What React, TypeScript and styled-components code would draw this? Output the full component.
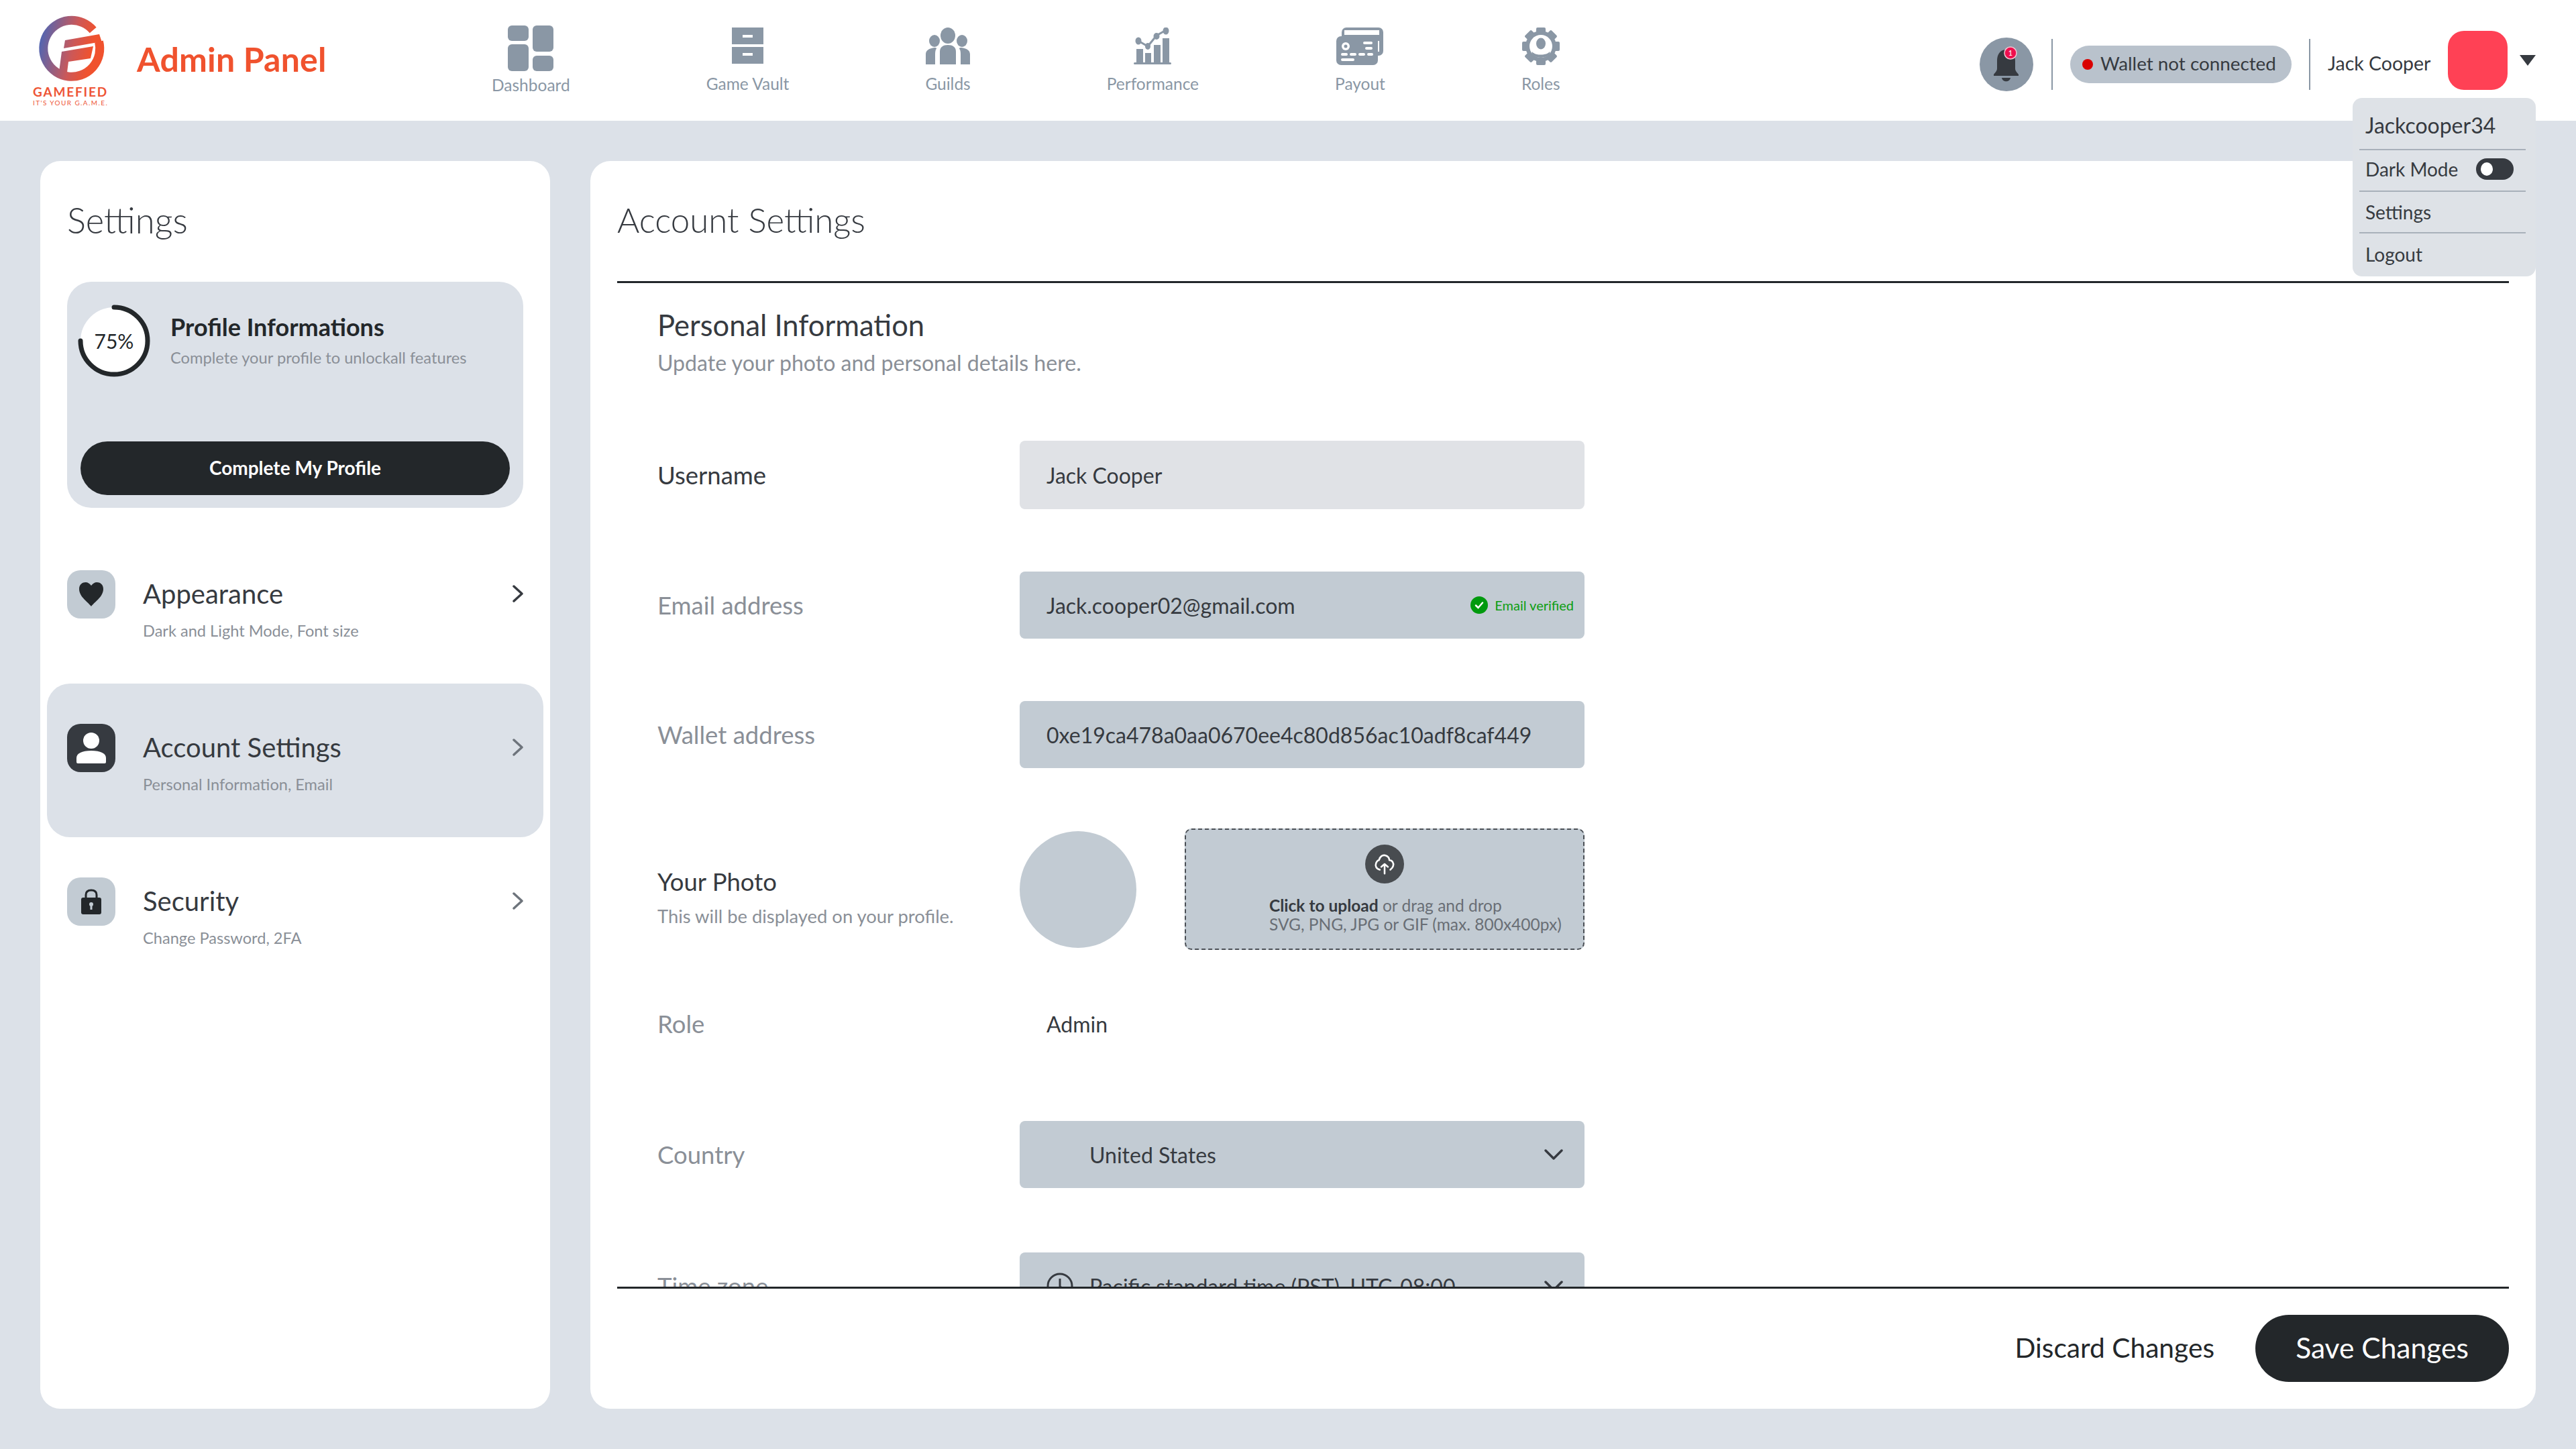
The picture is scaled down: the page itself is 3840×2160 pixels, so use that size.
import React from "react";
import styled, { createGlobalStyle } from "styled-components";

const Global = createGlobalStyle`
  html, body { margin: 0; padding: 0; background: #dce1e8; }
  * { box-sizing: border-box; }
  body { font-family: "Lato", "Noto Sans", sans-serif; color: #363a40; }
`;

const Page = styled.div`width: 3840px; height: 2160px; display: flex; flex-direction: column; background: #dce1e8; position: relative; overflow: hidden;`;
const Header = styled.header`height: 180px; background: #fff; display: flex; flex: none;`;
const LogoBox = styled.div`width: 204px; flex: none; position: relative;`;
const LogoWord = styled.span`position: absolute; left: 49px; top: 127px; width: 112px; text-align: center; font-size: 19px; line-height: 20px; font-weight: 700; letter-spacing: 1.8px; color: #ee5536; white-space: nowrap;`;
const LogoTag = styled.span`position: absolute; left: 49px; top: 146px; width: 112px; text-align: center; font-size: 10px; line-height: 14px; letter-spacing: 1.4px; color: #ee5536; white-space: nowrap;`;
const Brand = styled.div`width: 529px; flex: none; padding-top: 58px; font-size: 50px; line-height: 60px; font-weight: 700; color: #f0522e; letter-spacing: 0.2px;`;
const Nav = styled.nav`display: flex; gap: 203px; align-items: flex-start;`;
const NavItem = styled.div<{ $main?: boolean }>`display: flex; flex-direction: column; align-items: center; padding-top: ${p => p.$main ? 38 : 41}px;`;
const NavIcon = styled.div<{ $main?: boolean }>`height: ${p => p.$main ? 68 : 56}px; margin-bottom: ${p => p.$main ? 6 : 13}px; display: flex;`;
const NavLabel = styled.span`font-size: 24.5px; line-height: 30px; color: #8a97a5; white-space: nowrap; font-weight: 400;`;
const HeaderRight = styled.div`margin-left: auto; padding: 46px 60px 0 0; display: flex; align-items: flex-start;`;
const BellCircle = styled.div`width: 80px; height: 80px; margin-top: 10px; border-radius: 50%; background: #8a97a5; display: flex; align-items: center; justify-content: center;`;
const VRule = styled.div<{ $l: number; $r: number }>`width: 2px; height: 76px; margin: 12px ${p => p.$r}px 0 ${p => p.$l}px; background: #8a97a5;`;
const WalletPill = styled.div`width: 330px; height: 56px; margin-top: 22px; border-radius: 28px; background: #b9c2cc; display: flex; align-items: center; padding: 0 0 3px 18px; gap: 11px; font-size: 27.8px; color: #363a40; white-space: nowrap;`;
const RedDot = styled.span`width: 16px; height: 16px; border-radius: 50%; background: #d90000; flex: none; margin-top: 3px;`;
const UserName = styled.span`width: 179px; margin-top: 30px; font-size: 28.5px; line-height: 36px; white-space: nowrap; color: #363a40;`;
const Avatar = styled.div`width: 89px; height: 88px; border-radius: 24px; background: #ff4155;`;
const Caret = styled.div`width: 0; height: 0; margin: 36px 0 0 18px; border-left: 12px solid transparent; border-right: 12px solid transparent; border-top: 16px solid #363a40;`;

const Menu = styled.div`position: absolute; left: 3507px; top: 146px; width: 273px; height: 266px; background: #dee2e7; border-radius: 14px; padding: 0 15px 0 10px; z-index: 5;`;
const MenuRow = styled.div<{ $h: number; $line?: boolean; $size?: number; $pt?: number; $pb?: number }>`height: ${p => p.$h}px; display: flex; align-items: center; padding: ${p => p.$pt ?? 0}px 18px ${p => p.$pb ?? 0}px 9px; justify-content: space-between; font-size: ${p => p.$size ?? 28}px; color: #363a40; border-bottom: ${p => p.$line ? "2px solid #a8b0ba" : "none"};`;
const Toggle = styled.span`width: 56px; height: 32px; border-radius: 16px; background: #363a40; display: flex; align-items: center; padding-left: 7px;`;
const Knob = styled.span`width: 18px; height: 20px; border-radius: 50%; background: #fff;`;

const Body = styled.main`flex: 1; display: grid; grid-template-columns: 760px 2900px; gap: 60px; padding: 60px;`;
const Panel = styled.section`background: #fff; border-radius: 30px; display: flex; flex-direction: column; overflow: hidden; min-height: 0;`;
const SideTitle = styled.h1`margin: 0; height: 180px; padding: 53px 0 0 40px; font-size: 52.5px; line-height: 70px; font-weight: 300; color: #363a40;`;
const ProfileCard = styled.div`margin: 0 40px; height: 337px; background: #dce1e8; border-radius: 36px; padding: 34px 20px 0 16px; display: flex; flex-direction: column;`;
const ProfileTop = styled.div`display: flex; gap: 30px; height: 204px;`;
const Ring = styled.div`width: 108px; height: 108px; position: relative; flex: none; display: flex; align-items: center; justify-content: center; font-size: 30px; color: #23272a;`;
const RingSvg = styled.svg`position: absolute; inset: 0;`;
const RingValue = styled.span`position: relative;`;
const ProfileTitle = styled.div`font-size: 36px; line-height: 44px; font-weight: 700; color: #23272a; margin-top: 11px; white-space: nowrap;`;
const ProfileSub = styled.div`font-size: 23.7px; line-height: 34px; color: #8a8f97; margin-top: 7px; white-space: nowrap;`;
const CompleteBtn = styled.div`margin-left: 4px; height: 80px; width: 640px; border-radius: 40px; background: #23272a; color: #fff; display: flex; align-items: center; justify-content: center; padding-bottom: 3px; font-size: 28px; font-weight: 700;`;
const SideList = styled.div`display: flex; flex-direction: column; padding: 33px 10px 0;`;
const SideRow = styled.div<{ $active?: boolean }>`height: 229px; border-radius: 34px; padding: 60px 30px 0; display: flex; background: ${p => p.$active ? "#dce1e8" : "transparent"};`;
const SideIcon = styled.div<{ $dark?: boolean }>`width: 72px; height: 72px; border-radius: 20px; flex: none; display: flex; align-items: center; justify-content: center; background: ${p => p.$dark ? "#363a40" : "#c2cbd3"};`;
const SideText = styled.div`margin-left: 41px; flex: 1;`;
const SideRowTitle = styled.div`font-size: 40px; line-height: 50px; margin-top: 10px; color: #363a40; font-weight: 400; white-space: nowrap;`;
const SideRowSub = styled.div`font-size: 23.6px; line-height: 32px; margin-top: 14px; color: #8a8f97; white-space: nowrap;`;
const Chevron = styled.svg`flex: none; margin-top: 22px;`;

const MainHead = styled.h1`margin: 0; height: 179px; padding: 53px 0 0 40px; font-size: 51px; line-height: 70px; font-weight: 300; color: #363a40;`;
const Rule = styled.div`height: 3px; margin: 0 40px; background: #23272a; flex: none;`;
const Scroll = styled.div`height: 1496px; padding: 36px 0 0 100px; overflow: hidden; flex: none;`;
const SectionTitle = styled.h2`margin: 0; font-size: 43.5px; line-height: 52px; font-weight: 400; color: #363a40;`;
const SectionSub = styled.p`margin: 11px 0 0; font-size: 32.1px; line-height: 40px; color: #8a8f97;`;
const Form = styled.div`display: flex; flex-direction: column; margin-top: 96px;`;
const Row = styled.div<{ $mt?: number }>`display: flex; align-items: center; margin-top: ${p => p.$mt ?? 0}px;`;
const LabelCol = styled.div<{ $pt?: number }>`width: 540px; flex: none; padding-top: ${p => p.$pt ?? 0}px;`;
const Label = styled.div<{ $strong?: boolean }>`font-size: 36.5px; line-height: 44px; color: ${p => p.$strong ? "#363a40" : "#8a8f97"};`;
const LabelSub = styled.div`font-size: 27.4px; line-height: 36px; color: #8a8f97; margin-top: 12px; white-space: nowrap;`;
const Field = styled.div<{ $tone?: "soft" | "mid"; $h?: number }>`width: 842px; height: ${p => p.$h ?? 100}px; flex: none; border-radius: 8px; background: ${p => p.$tone === "soft" ? "#e0e2e6" : "#c2cbd3"}; display: flex; align-items: center; padding: 0 16px 0 40px; font-size: 32px; color: #363a40; white-space: nowrap;`;
const FieldGrow = styled.span`flex: 1;`;
const Verified = styled.span`display: flex; align-items: center; gap: 10px; font-size: 20px; color: #0c9e12;`;
const PlainValue = styled.div`padding-left: 40px; height: 100px; display: flex; align-items: center; font-size: 32px; color: #363a40;`;
const Photo = styled.div`width: 174px; height: 174px; border-radius: 50%; background: #c2cbd3; flex: none;`;
const Upload = styled.div`width: 596px; height: 181px; margin-left: 72px; flex: none; border: 2px dashed #4a4f55; border-radius: 10px; background: #c2cbd3; display: flex; flex-direction: column; align-items: center; padding-top: 22px;`;
const UploadIcon = styled.div`width: 58px; height: 58px; border-radius: 50%; background: #484c50; display: flex; align-items: center; justify-content: center;`;
const UploadText = styled.div`align-self: flex-start; margin: 19px 0 0 124px; font-size: 24.5px; line-height: 28px; color: #696e75; white-space: nowrap;`;
const UploadStrong = styled.b`font-weight: 700; color: #363a40;`;
const SelectValue = styled.span`flex: 1; padding-left: 64px;`;
const ClockSpace = styled.span`flex: 1; padding-left: 24px;`;
const ChevronSlot = styled.span`display: flex; margin-right: 15px;`;
const Footer = styled.div`flex: 1; display: flex; align-items: center; justify-content: flex-end; padding: 0 40px 1px 0; gap: 61px;`;
const Discard = styled.span`font-size: 40.7px; color: #23272a; padding-bottom: 4px;`;
const Save = styled.div`width: 378px; height: 100px; border-radius: 50px; background: #23272a; color: #fff; display: flex; align-items: center; justify-content: center; font-size: 42.5px; padding-bottom: 3px;`;

const Logo = () => (
  <svg width="200" height="130" viewBox="0 0 200 130" style={{ position: "absolute", left: 0, top: 0 }}>
    <defs>
      <linearGradient id="lg" gradientUnits="userSpaceOnUse" x1="58" y1="60" x2="150" y2="80">
        <stop offset="0" stopColor="#4f66b4" />
        <stop offset="0.55" stopColor="#cc5858" />
        <stop offset="0.85" stopColor="#f0522e" />
      </linearGradient>
    </defs>
    <path d="M138.7 45 A42 42 0 1 0 147.5 62" fill="none" stroke="url(#lg)" strokeWidth="13" />
    <path d="M97 60 L148 51 L155 72 L147 70 L146 63 L95 72 Z" fill="url(#lg)" />
    <path d="M92 77 L139 69 L135 87 L102 92 L100 108 L88 107 Z" fill="url(#lg)" />
  </svg>
);

const DashIcon = () => (
  <svg width="68" height="68" viewBox="0 0 68 68" fill="#8a97a5">
    <rect x="0" y="0" width="31" height="23" rx="6" /><rect x="37" y="0" width="31" height="39" rx="6" />
    <rect x="0" y="28" width="31" height="40" rx="6" /><rect x="37" y="45" width="31" height="23" rx="6" />
  </svg>
);
const VaultIcon = () => (
  <svg width="47" height="55" viewBox="0 0 47 55">
    <rect width="47" height="25" y="0" fill="#8a97a5" /><rect width="47" height="25" y="29" fill="#8a97a5" />
    <rect x="16" y="11" width="15" height="4" fill="#fff" /><rect x="16" y="38" width="15" height="4" fill="#fff" />
  </svg>
);
const GuildIcon = () => (
  <svg width="66" height="55" viewBox="0 0 66 55" fill="#8a97a5">
    <ellipse cx="33" cy="12" rx="11" ry="12" />
    <ellipse cx="13" cy="20" rx="8" ry="9" /><ellipse cx="54" cy="20" rx="8" ry="9" />
    <path d="M21 55 V36 C21 29 26 26 33 26 C40 26 45 29 45 36 V55 Z" />
    <path d="M0 55 V40 C0 34 5 31 13 30 C16 30 17 31 15 33 C14 36 14 38 14 42 V55 Z" />
    <path d="M66 55 V40 C66 34 61 31 53 30 C50 30 49 31 51 33 C52 36 52 38 52 42 V55 Z" />
  </svg>
);
const PerfIcon = () => (
  <svg width="56" height="55" viewBox="0 0 56 55" fill="#8a97a5">
    <rect x="4" y="32" width="10" height="20" /><rect x="17" y="38" width="9" height="14" />
    <rect x="30" y="26" width="10" height="26" /><rect x="43" y="16" width="10" height="36" />
    <rect x="0" y="52" width="56" height="3" rx="1.5" />
    <path d="M7 20 L21 28 L34 12 L48 4" fill="none" stroke="#8a97a5" strokeWidth="3" />
    <ellipse cx="7" cy="20" rx="4.5" ry="5.5" /><ellipse cx="21" cy="28" rx="4" ry="5" />
    <ellipse cx="34" cy="13" rx="4.5" ry="5" /><ellipse cx="48" cy="5" rx="4.5" ry="5.5" />
  </svg>
);
const PayIcon = () => (
  <svg width="70" height="56" viewBox="0 0 70 56">
    <rect x="8" y="0" width="62" height="42" rx="7" fill="#8a97a5" />
    <rect x="12" y="4" width="52" height="7" fill="#fff" />
    <rect x="0" y="13" width="62" height="43" rx="7" fill="#8a97a5" />
    <rect x="62" y="20" width="2" height="16" fill="#fff" />
    <circle cx="14" cy="28" r="6" fill="#fff" /><circle cx="14" cy="28" r="2.5" fill="#8a97a5" />
    <rect x="40" y="21" width="14" height="4" rx="2" fill="#fff" /><rect x="43" y="29" width="11" height="4" rx="2" fill="#fff" />
    <rect x="7" y="38" width="10" height="4" rx="2" fill="#fff" /><rect x="20" y="38" width="10" height="4" rx="2" fill="#fff" />
    <rect x="33" y="38" width="10" height="4" rx="2" fill="#fff" /><rect x="46" y="38" width="9" height="4" rx="2" fill="#fff" />
    <rect x="7" y="46" width="20" height="4" rx="2" fill="#fff" />
  </svg>
);
const RolesIcon = () => (
  <svg width="56" height="56" viewBox="0 0 56 56" fill="#8a97a5">
    {[0, 45, 90, 135, 180, 225, 270, 315].map(a => (
      <rect key={a} x="21" y="0" width="14" height="11" rx="2" transform={`rotate(${a} 28 28)`} />
    ))}
    <circle cx="28" cy="28" r="23" />
    <circle cx="28" cy="28" r="17" fill="#fff" />
    <ellipse cx="28" cy="24" rx="7" ry="8.5" />
    <path d="M15 36 C19 42 37 42 41 36 C43 40 37 45 28 45 C19 45 13 40 15 36 Z" />
  </svg>
);
const Bell = () => (
  <svg width="56" height="60" viewBox="0 0 56 60">
    <g transform="translate(2 0)">
      <path d="M24 8 C15 9 12 17 12 25 V36 C12 40 9 42 7 45 V47 H44 V45 C42 42 39 40 39 36 V25 C39 17 35 9 27 8 Z" fill="#363a40" />
      <path d="M19 50 H32 C31 57 20 57 19 50 Z" fill="#363a40" />
      <circle cx="32" cy="13" r="9" fill="#ee0f4e" stroke="#f3c4d0" strokeWidth="1.5" />
      <text x="32" y="17" fontSize="11" fill="#fff" textAnchor="middle" fontFamily="Lato">1</text>
    </g>
  </svg>
);
const Heart = () => (
  <svg width="36" height="36" viewBox="0 0 36 36"><path d="M18 36 C14 30 0 22 0 10 C0 3 5 0 9.500 0 C13 0 16 2 18 5 C20 2 23 0 26.500 0 C31 0 36 3 36 10 C36 22 22 30 18 36 Z" fill="#23272a" /></svg>
);
const UserIcon = () => (
  <svg width="44" height="46" viewBox="0 0 44 46" fill="#fff">
    <ellipse cx="22" cy="12" rx="12" ry="12" />
    <path d="M0 44 V38 C0 31 8 27 22 27 C36 27 44 31 44 38 V44 Q44 46 42 46 H2 Q0 46 0 44 Z" />
  </svg>
);
const LockIcon = () => (
  <svg width="30" height="38" viewBox="0 0 30 38">
    <path d="M7 16 V9 C7 4 10 2 15 2 C20 2 23 4 23 9 V16" fill="none" stroke="#23272a" strokeWidth="3" />
    <rect x="0" y="13" width="30" height="25" rx="3" fill="#23272a" />
    <circle cx="15" cy="23" r="3" fill="#c2cbd3" /><rect x="13.5" y="23" width="3" height="8" fill="#c2cbd3" />
  </svg>
);
const Chev = ({ dim }: { dim?: boolean }) => (
  <Chevron width="16" height="26" viewBox="0 0 16 26" fill="none" stroke={dim ? "#6e747c" : "#363a40"} strokeWidth="3.500" strokeLinecap="round" strokeLinejoin="round">
    <path d="M2 2 L14 13 L2 24" />
  </Chevron>
);
const Check = () => (
  <svg width="26" height="26" viewBox="0 0 26 26"><circle cx="13" cy="13" r="13" fill="#009a0e" /><path d="M8 13.500 L11.500 17 L18 9.500" fill="none" stroke="#fff" strokeWidth="2.500" strokeLinecap="round" /></svg>
);
const Cloud = () => (
  <svg width="34" height="34" viewBox="0 0 24 24" fill="none" stroke="#fff" strokeWidth="1.800" strokeLinecap="round" strokeLinejoin="round">
    <path d="M7 18 C3 17 2 14 3 11 C4 9 5 8 6 8 C7 4 10 2 13 3 C16 4 17 6 17 8 C20 8 22 11 21 14 C20.500 16 19 17 18 18" />
    <path d="M12 22 V12 M8.500 15 L12 12 L15.500 15" />
  </svg>
);
const SelectChevron = () => (
  <ChevronSlot>
    <svg width="30" height="18" viewBox="0 0 30 18" fill="none" stroke="#363a40" strokeWidth="3.500" strokeLinecap="round" strokeLinejoin="round"><path d="M3 3 L15 15 L27 3" /></svg>
  </ChevronSlot>
);
const Clock = () => (
  <svg width="40" height="40" viewBox="0 0 40 40" fill="none" stroke="#363a40" strokeWidth="3"><circle cx="20" cy="20" r="18" /><path d="M20 9 V21 L27 25" /></svg>
);

const navItems = [
  { label: "Dashboard", icon: <DashIcon />, main: true },
  { label: "Game Vault", icon: <VaultIcon /> },
  { label: "Guilds", icon: <GuildIcon /> },
  { label: "Performance", icon: <PerfIcon /> },
  { label: "Payout", icon: <PayIcon /> },
  { label: "Roles", icon: <RolesIcon /> },
];

export default function App() {
  return (
    <Page>
      <Global />
      <Header>
        <LogoBox><Logo /><LogoWord>GAMEFIED</LogoWord><LogoTag>IT'S YOUR G.A.M.E.</LogoTag></LogoBox>
        <Brand>Admin Panel</Brand>
        <Nav>
          {navItems.map(n => (
            <NavItem key={n.label} $main={n.main}>
              <NavIcon $main={n.main}>{n.icon}</NavIcon>
              <NavLabel>{n.label}</NavLabel>
            </NavItem>
          ))}
        </Nav>
        <HeaderRight>
          <BellCircle><Bell /></BellCircle>
          <VRule $l={27} $r={26} />
          <WalletPill><RedDot />Wallet not connected</WalletPill>
          <VRule $l={26} $r={26} />
          <UserName>Jack Cooper</UserName>
          <Avatar />
          <Caret />
        </HeaderRight>
      </Header>
      <Menu>
        <MenuRow $h={78} $line $size={32} $pt={4}>Jackcooper34</MenuRow>
        <MenuRow $h={62} $line $pb={4}>Dark Mode<Toggle><Knob /></Toggle></MenuRow>
        <MenuRow $h={62} $line>Settings</MenuRow>
        <MenuRow $h={62}>Logout</MenuRow>
      </Menu>
      <Body>
        <Panel>
          <SideTitle>Settings</SideTitle>
          <ProfileCard>
            <ProfileTop>
              <Ring>
                <RingSvg width="108" height="108" viewBox="0 0 108 108">
                  <circle cx="54" cy="54" r="50" fill="#fff" />
                  <path d="M54 4 A50 50 0 1 1 4 54" fill="none" stroke="#23272a" strokeWidth="7" strokeLinecap="round" />
                </RingSvg>
                <RingValue>75%</RingValue>
              </Ring>
              <div>
                <ProfileTitle>Profile Informations</ProfileTitle>
                <ProfileSub>Complete your profile to unlockall features</ProfileSub>
              </div>
            </ProfileTop>
            <CompleteBtn>Complete My Profile</CompleteBtn>
          </ProfileCard>
          <SideList>
            <SideRow>
              <SideIcon><Heart /></SideIcon>
              <SideText><SideRowTitle>Appearance</SideRowTitle><SideRowSub>Dark and Light Mode, Font size</SideRowSub></SideText>
              <Chev />
            </SideRow>
            <SideRow $active>
              <SideIcon $dark><UserIcon /></SideIcon>
              <SideText><SideRowTitle>Account Settings</SideRowTitle><SideRowSub>Personal Information, Email</SideRowSub></SideText>
              <Chev dim />
            </SideRow>
            <SideRow>
              <SideIcon><LockIcon /></SideIcon>
              <SideText><SideRowTitle>Security</SideRowTitle><SideRowSub>Change Password, 2FA</SideRowSub></SideText>
              <Chev dim />
            </SideRow>
          </SideList>
        </Panel>
        <Panel>
          <MainHead>Account Settings</MainHead>
          <Rule />
          <Scroll>
            <SectionTitle>Personal Information</SectionTitle>
            <SectionSub>Update your photo and personal details here.</SectionSub>
            <Form>
              <Row>
                <LabelCol><Label $strong>Username</Label></LabelCol>
                <Field $tone="soft" $h={102}>Jack Cooper</Field>
              </Row>
              <Row $mt={93}>
                <LabelCol><Label>Email address</Label></LabelCol>
                <Field><FieldGrow>Jack.cooper02@gmail.com</FieldGrow><Verified><Check />Email verified</Verified></Field>
              </Row>
              <Row $mt={93}>
                <LabelCol><Label>Wallet address</Label></LabelCol>
                <Field>0xe19ca478a0aa0670ee4c80d856ac10adf8caf449</Field>
              </Row>
              <Row $mt={90}>
                <LabelCol $pt={25}><Label $strong>Your Photo</Label><LabelSub>This will be displayed on your profile.</LabelSub></LabelCol>
                <Photo />
                <Upload>
                  <UploadIcon><Cloud /></UploadIcon>
                  <UploadText><UploadStrong>Click to upload</UploadStrong> or drag and drop<br />SVG, PNG, JPG or GIF (max. 800x400px)</UploadText>
                </Upload>
              </Row>
              <Row $mt={60}>
                <LabelCol><Label>Role</Label></LabelCol>
                <PlainValue>Admin</PlainValue>
              </Row>
              <Row $mt={95}>
                <LabelCol><Label>Country</Label></LabelCol>
                <Field><SelectValue>United States</SelectValue><SelectChevron /></Field>
              </Row>
              <Row $mt={96}>
                <LabelCol><Label>Time zone</Label></LabelCol>
                <Field><Clock /><ClockSpace>Pacific standard time (PST), UTC-08:00</ClockSpace><SelectChevron /></Field>
              </Row>
            </Form>
          </Scroll>
          <Rule />
          <Footer>
            <Discard>Discard Changes</Discard>
            <Save>Save Changes</Save>
          </Footer>
        </Panel>
      </Body>
    </Page>
  );
}
